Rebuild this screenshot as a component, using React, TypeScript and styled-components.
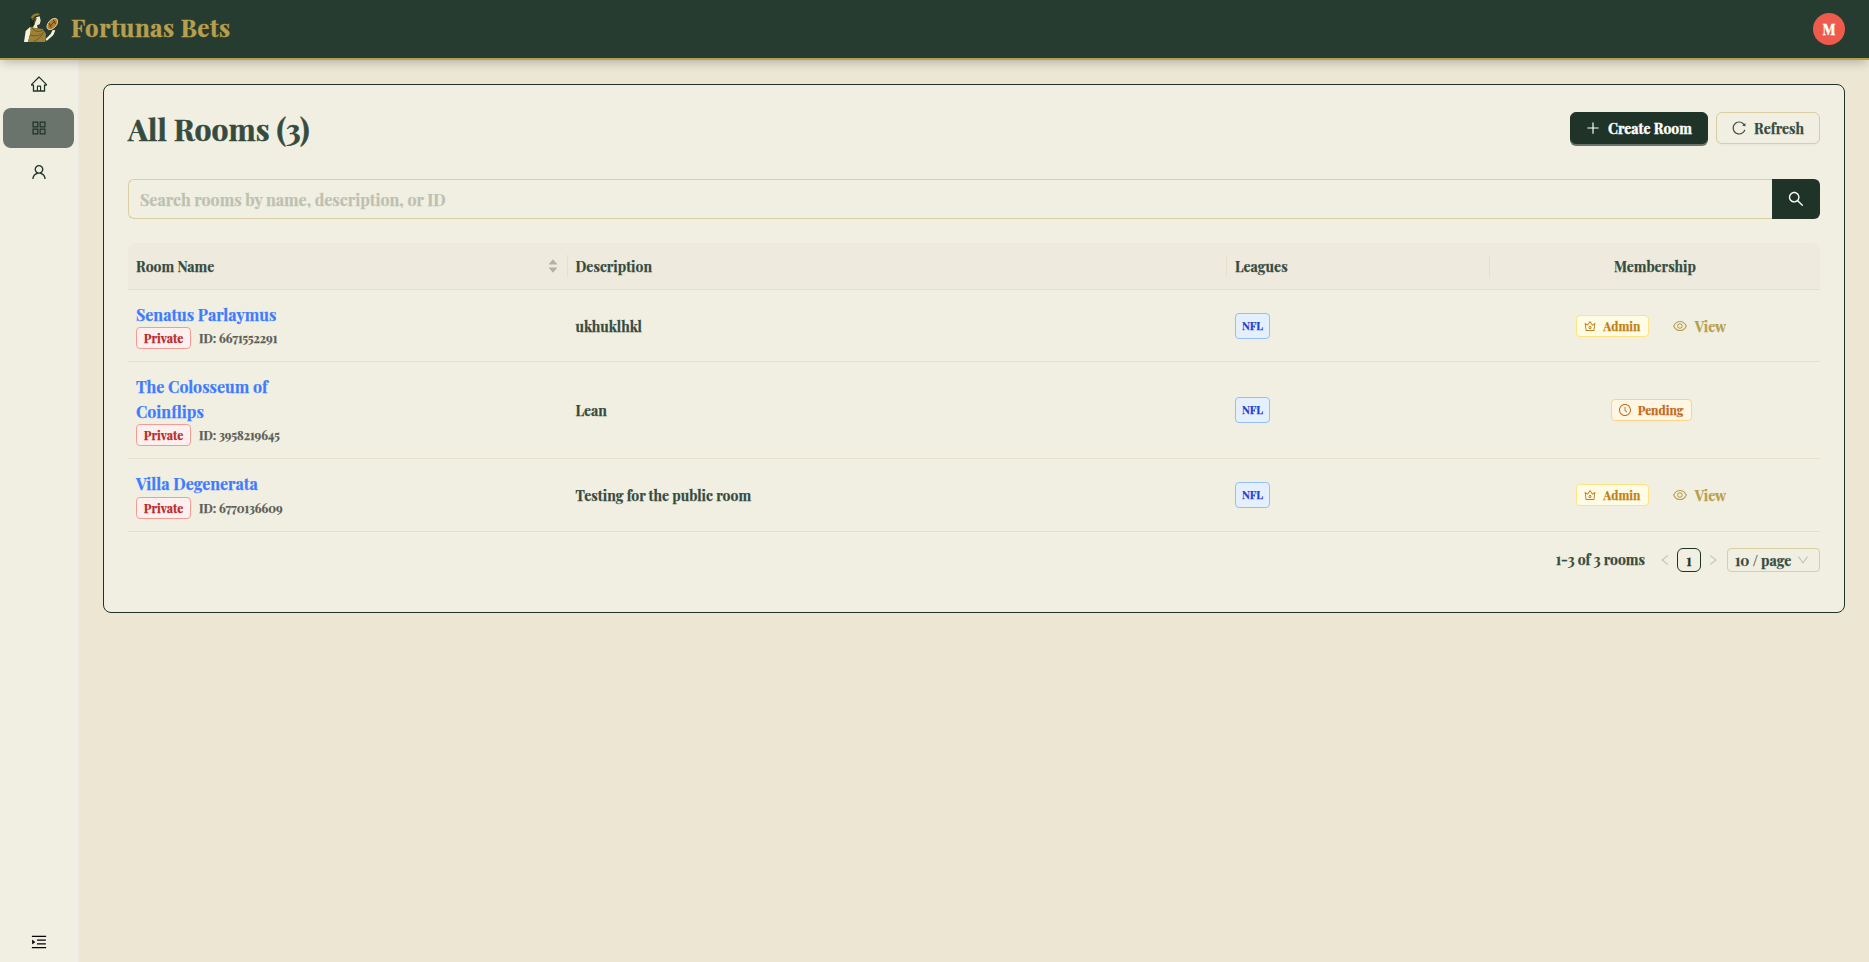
import React from 'react';
import styled, { createGlobalStyle } from 'styled-components';
import {
  AiOutlineHome, AiOutlineAppstore, AiOutlineUser, AiOutlineMenuUnfold, AiOutlinePlus, AiOutlineReload,
  AiOutlineSearch, AiFillCaretUp, AiFillCaretDown, AiOutlineCrown, AiOutlineEye, AiOutlineClockCircle,
  AiOutlineLeft, AiOutlineRight, AiOutlineDown,
} from 'react-icons/ai';

const ink = '#364b3f';
const forest = '#1f3329';
const gold = '#b89f4d';

/* Trims the icons' built-in margin so the strokes fill their box. */
const trim = { viewBox: '64 64 896 896' };

const GlobalStyle = createGlobalStyle`
  *, *::before, *::after { box-sizing: border-box; }
  body {
    margin: 0;
    background: #ece6d3;
    color: ${ink};
    font: 700 14px/22px "Playfair Display", "Liberation Serif", serif;
    -webkit-text-stroke: 0.25px currentColor;
  }
  svg { display: block; flex: none; }
`;

const Page = styled.div`
  display: flex;
  flex-direction: column;
  height: 962px;
`;

const Header = styled.header`
  position: relative;
  z-index: 1;
  display: flex;
  align-items: center;
  justify-content: space-between;
  height: 60px;
  padding: 0 24px;
  background: #263c31;
  border-bottom: 2px solid ${gold};
  box-shadow: 0 4px 10px -2px rgba(0, 0, 0, 0.25);
`;

const Brand = styled.div`
  display: flex;
  align-items: center;
  gap: 13px;
  height: 54px;
  margin-bottom: 4px;
  color: ${gold};
  font-size: 24px;
  letter-spacing: 0.5px;
  -webkit-text-stroke-width: 0.45px;
`;

const Avatar = styled.div`
  width: 32px;
  height: 32px;
  border-radius: 50%;
  background: #ee5a4c;
  color: #fff;
  line-height: 34px;
  text-align: center;
  -webkit-text-stroke-width: 0.4px;
`;

const Body = styled.div`
  display: flex;
  flex: 1;
  min-height: 0;
`;

const Sidebar = styled.nav`
  display: flex;
  flex-direction: column;
  gap: 4px;
  width: 79px;
  padding: 4px 4px 0 3px;
  background: #f1efe1;
  border-right: 1px solid #ebe9e4;
`;

const NavItem = styled.a<{ $active?: boolean }>`
  display: flex;
  align-items: center;
  justify-content: center;
  height: 40px;
  padding-left: 1px;
  border-radius: 8px;
  font-size: 16px;
  color: ${forest};
  background: ${(p) => (p.$active ? '#6b736d' : 'transparent')};
`;

const Expand = styled(NavItem)`
  margin-top: auto;
  color: #000;
`;

const Main = styled.main`
  flex: 1;
  padding: 24px;
`;

const Card = styled.section`
  height: 529px;
  padding: 24px;
  background: #f1efe1;
  border: 1px solid ${forest};
  border-radius: 8px;
`;

const TitleRow = styled.div`
  display: flex;
  align-items: center;
  justify-content: space-between;
  height: 38px;
`;

const Title = styled.h1`
  margin: 0;
  padding-top: 2px;
  font-size: 30px;
  line-height: 38px;
  -webkit-text-stroke-width: 0.55px;
`;

const Actions = styled.div`
  display: flex;
  gap: 8px;
`;

const Button = styled.button<{ $primary?: boolean }>`
  display: flex;
  align-items: center;
  justify-content: center;
  gap: 8px;
  width: ${(p) => (p.$primary ? '138px' : '104px')};
  height: 32px;
  padding: 0;
  font: inherit;
  white-space: nowrap;
  border-radius: 6px;
  border: 1px solid ${(p) => (p.$primary ? forest : '#d9cda3')};
  background: ${(p) => (p.$primary ? forest : '#f1efe1')};
  color: ${(p) => (p.$primary ? '#fff' : ink)};
  box-shadow: ${(p) => (p.$primary ? '0 2px 0 #6b736d' : '0 2px 0 rgba(0,0,0,0.02)')};
  -webkit-text-stroke-width: ${(p) => (p.$primary ? '0.4px' : '0.25px')};
`;

const Search = styled.div`
  display: flex;
  height: 40px;
  margin: 32px 0 24px;
`;

const SearchInput = styled.div`
  flex: 1;
  padding: 0 11px;
  border: 1px solid #d9cda3;
  border-right: 0;
  border-radius: 6px 0 0 6px;
  font-size: 16px;
  line-height: 39px;
  color: #bcc1b2;
`;

const SearchButton = styled.div`
  display: flex;
  align-items: center;
  justify-content: center;
  width: 48px;
  border-radius: 0 6px 6px 0;
  background: ${forest};
  color: #fff;
  font-size: 16px;
`;

const Row = styled.div`
  display: grid;
  grid-template-columns: 439.5px 659.5px 263px 1fr;
  border-bottom: 1px solid #e4e0c9;
`;

const HeadRow = styled(Row)`
  background: #eeebde;
  border-radius: 8px 8px 0 0;
`;

const Cell = styled.div<{ $center?: boolean }>`
  display: flex;
  align-items: center;
  justify-content: ${(p) => (p.$center ? 'center' : 'flex-start')};
  padding: 12px 8px;
  white-space: nowrap;
`;

const HeadCell = styled(Cell)`
  position: relative;
  &:not(:last-child)::after {
    content: '';
    position: absolute;
    top: 12px;
    right: 0;
    width: 1px;
    height: 22px;
    background: #e4e0c9;
  }
`;

const Sorter = styled.span`
  display: flex;
  flex-direction: column;
  margin-left: auto;
  padding-right: 1px;
  font-size: 12px;
  color: #aeb3a5;
  svg + svg { margin-top: -4px; }
`;

const RoomCell = styled(Cell)`
  flex-direction: column;
  align-items: flex-start;
`;

const RoomName = styled.a`
  width: 150px;
  font-size: 16px;
  line-height: 25.14px;
  color: #407bff;
  white-space: normal;
`;

const Meta = styled.div`
  display: flex;
  gap: 8px;
  height: 22px;
  font-size: 12px;
  color: #5c5d58;
`;

const tones = {
  red: ['#b52a2a', '#fdf0ee', '#f59b94'],
  blue: ['#2440cc', '#e5f0fe', '#93bffb'],
  yellow: ['#bf7f17', '#fffce6', '#fbe481'],
  orange: ['#c16a1d', '#fff7e4', '#fad387'],
};

const Tag = styled.span<{ $tone: keyof typeof tones; $w: number; $tall?: boolean }>`
  display: flex;
  align-items: center;
  justify-content: center;
  gap: 7px;
  width: ${(p) => p.$w}px;
  height: ${(p) => (p.$tall ? 26 : 22)}px;
  border-radius: 4px;
  font-size: ${(p) => (p.$tall ? 11 : 12)}px;
  line-height: 20px;
  color: ${(p) => tones[p.$tone][0]};
  background: ${(p) => tones[p.$tone][1]};
  border: 1px solid ${(p) => tones[p.$tone][2]};
`;

const PendingTag = styled(Tag)`
  margin-right: 8px;
`;

const ViewLink = styled.a`
  display: flex;
  align-items: center;
  gap: 8px;
  margin-left: 16px;
  padding: 0 8px;
  color: ${gold};
`;

const Pagination = styled.div`
  display: flex;
  align-items: center;
  justify-content: flex-end;
  height: 24px;
  margin-top: 16px;
`;

const Arrow = styled.span`
  display: flex;
  justify-content: center;
  width: 24px;
  font-size: 12px;
  color: #bcc1b2;
`;

const PageNumber = styled.span`
  width: 24px;
  height: 24px;
  border: 1px solid ${forest};
  border-radius: 6px;
  line-height: 23px;
  text-align: center;
  color: ${forest};
`;

const PageSize = styled.span`
  display: flex;
  align-items: center;
  justify-content: space-between;
  width: 93px;
  height: 24px;
  margin-left: 2px;
  padding: 0 10px 0 7px;
  border: 1px solid #d9cda3;
  border-radius: 4px;
  svg { color: #bcc1b2; font-size: 12px; }
`;

/* The font's tall ascent sits high in a 22px line; the taller line box centres it. */
const Label = styled.span`
  line-height: 24px;
  margin-bottom: -2px;
`;

const Total = styled.span`
  margin-right: 8px;
`;

const Logo = () => (
  <svg width="34" height="29" viewBox="0 0 102 87">
    <path d="M21 12 Q17 26 19 36 L28 40 L38 30 L46 8Z" fill="#132a1f" />
    <path d="M36 13 L47 10 L50 23 L47 34 L39 37 L41 46 L25 46 L32 34 L33 22Z" fill="#f3ead2" />
    <path d="M21 13 Q27 0 44 1 L47 6 L34 9 L24 19Z" fill="#937b33" />
    <path d="M24 22 Q30 14 36 17 L31 30" fill="none" stroke="#58572c" strokeWidth="4" />
    <path d="M18 42 L5 54 L0 87 L12 87 L18 64 L24 46Z" fill="#f8f2df" />
    <path d="M19 42 L40 46 L56 48 L66 62 L64 87 L12 87 L19 62Z" fill="#9c8136" />
    <path d="M24 44 Q34 62 58 52 M18 66 Q42 74 60 58 M28 87 Q46 78 56 64" fill="none" stroke="#655822" strokeWidth="2.5" />
    <path d="M65 78 L80 63 L86 51 L94 52 L88 66 L68 84Z" fill="#f8f2df" />
    <ellipse cx="85" cy="33" rx="20" ry="12" transform="rotate(-48 85 33)" fill="#b57f2d" stroke="#efe1b4" strokeWidth="2.5" />
    <path d="M78 40 L92 25 M75 30 L82 44 M88 21 L95 33" stroke="#3c3218" strokeWidth="2.5" />
  </svg>
);

const rooms = [
  { name: 'Senatus Parlaymus', id: '6671552291', about: 'ukhuklhkl', admin: true },
  { name: 'The Colosseum of Coinflips', id: '3958219645', about: 'Lean', admin: false },
  { name: 'Villa Degenerata', id: '6770136609', about: 'Testing for the public room', admin: true },
];

export default function App() {
  return (
    <Page>
      <GlobalStyle />
      <Header>
        <Brand><Logo /><span>Fortunas Bets</span></Brand>
        <Avatar>M</Avatar>
      </Header>
      <Body>
        <Sidebar>
          <NavItem><AiOutlineHome {...trim} /></NavItem>
          <NavItem $active><AiOutlineAppstore {...trim} /></NavItem>
          <NavItem><AiOutlineUser {...trim} /></NavItem>
          <Expand><AiOutlineMenuUnfold {...trim} /></Expand>
        </Sidebar>
        <Main>
          <Card>
            <TitleRow>
              <Title>All Rooms (3)</Title>
              <Actions>
                <Button $primary><AiOutlinePlus size={14} {...trim} /><Label>Create Room</Label></Button>
                <Button><AiOutlineReload size={14} {...trim} /><Label>Refresh</Label></Button>
              </Actions>
            </TitleRow>
            <Search>
              <SearchInput>Search rooms by name, description, or ID</SearchInput>
              <SearchButton><AiOutlineSearch {...trim} /></SearchButton>
            </Search>
            <HeadRow>
              <HeadCell>
                <Label>Room Name</Label>
                <Sorter><AiFillCaretUp /><AiFillCaretDown /></Sorter>
              </HeadCell>
              <HeadCell><Label>Description</Label></HeadCell>
              <HeadCell><Label>Leagues</Label></HeadCell>
              <HeadCell $center><Label>Membership</Label></HeadCell>
            </HeadRow>
            {rooms.map((r) => (
              <Row key={r.id}>
                <RoomCell>
                  <RoomName>{r.name}</RoomName>
                  <Meta><Tag $tone="red" $w={55}>Private</Tag><span>ID: {r.id}</span></Meta>
                </RoomCell>
                <Cell><Label>{r.about}</Label></Cell>
                <Cell><Tag $tone="blue" $w={35} $tall>NFL</Tag></Cell>
                <Cell $center>
                  {r.admin ? (
                    <>
                      <Tag $tone="yellow" $w={73}><AiOutlineCrown {...trim} />Admin</Tag>
                      <ViewLink><AiOutlineEye {...trim} /><Label>View</Label></ViewLink>
                    </>
                  ) : (
                    <PendingTag $tone="orange" $w={81}><AiOutlineClockCircle {...trim} />Pending</PendingTag>
                  )}
                </Cell>
              </Row>
            ))}
            <Pagination>
              <Total>1-3 of 3 rooms</Total>
              <Arrow><AiOutlineLeft {...trim} /></Arrow>
              <PageNumber>1</PageNumber>
              <Arrow><AiOutlineRight {...trim} /></Arrow>
              <PageSize><Label>10 / page</Label><AiOutlineDown {...trim} /></PageSize>
            </Pagination>
          </Card>
        </Main>
      </Body>
    </Page>
  );
}
